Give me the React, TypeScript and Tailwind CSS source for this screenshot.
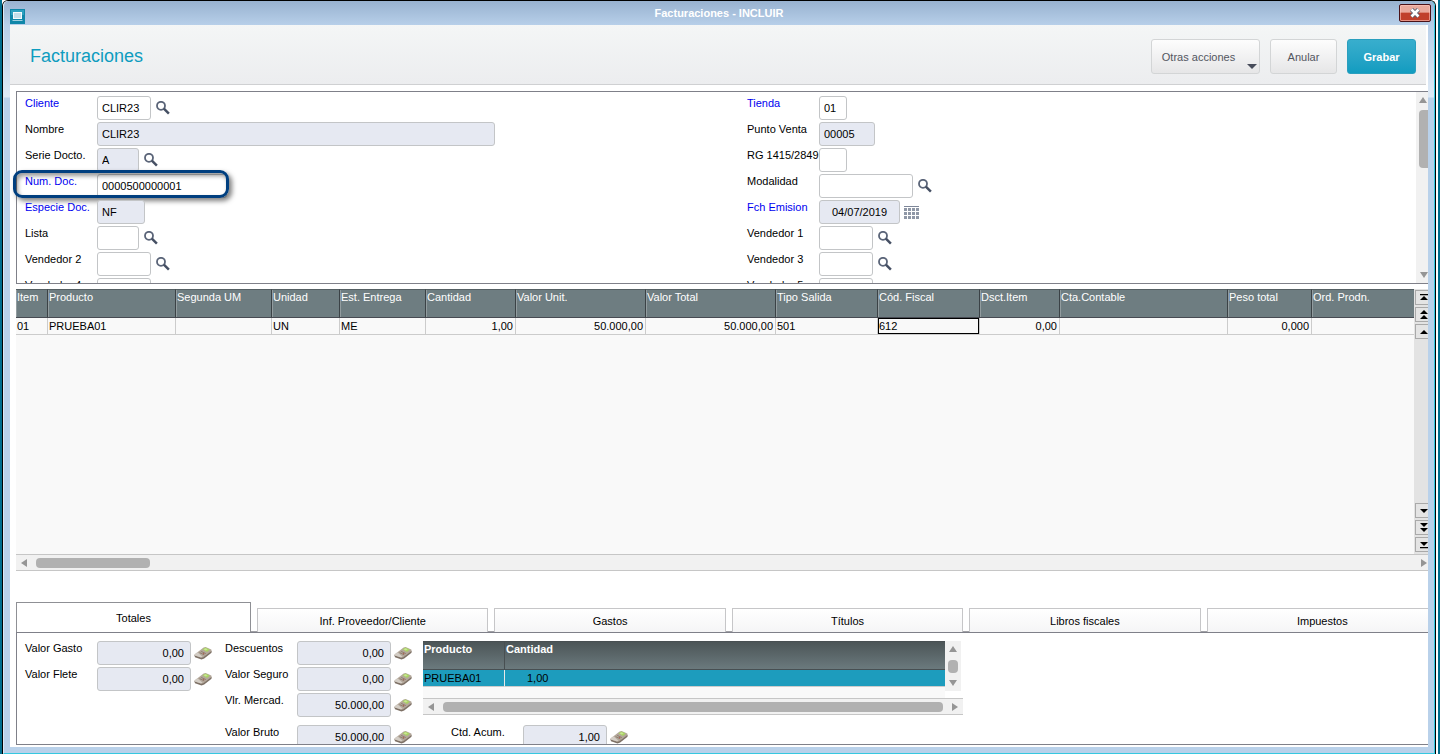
import { useId } from "react";
import type { ReactNode } from "react";

type Dir = "up" | "down" | "left" | "right";

const arrowPaths: Record<Dir, string> = {
  up: "M0 7 L4 1 L8 7Z",
  down: "M0 1 L8 1 L4 7Z",
  left: "M7 0 L7 8 L1 4Z",
  right: "M1 0 L7 4 L1 8Z",
};

function Arrow({ dir }: { dir: Dir }) {
  return (
    <svg width="8" height="8" viewBox="0 0 8 8" className="block shrink-0" aria-hidden="true">
      <path d={arrowPaths[dir]} fill="#959595" />
    </svg>
  );
}

function SearchIcon() {
  return (
    <svg width="14" height="14" viewBox="0 0 14 14" aria-hidden="true">
      <circle cx="5" cy="4.8" r="4" fill="none" stroke="#5a6478" strokeWidth="1.8" />
      <path d="M7.9 7.7 L12.9 12.7" stroke="#454f63" strokeWidth="2.5" />
    </svg>
  );
}

function CalendarIcon() {
  const rows = [2, 6, 10];
  const cols = [0, 4, 8, 12];
  return (
    <svg width="15" height="14" viewBox="0 0 15 14" aria-hidden="true" shapeRendering="crispEdges">
      <rect x="0" y="0" width="15" height="1" fill="#7d8698" />
      {rows.map((y) =>
        cols.map((x) => <rect key={`${x}-${y}`} x={x} y={y} width="3" height="3" fill="#8f97a6" />)
      )}
    </svg>
  );
}

function CalcIcon() {
  return (
    <svg width="18" height="15" viewBox="0 0 18 15" aria-hidden="true">
      <path d="M0.3 9.2 L11 3 L17.7 5 L17.5 6.8 L10.2 12.6 L7.5 13.4 L1 11.2Z" fill="#7d7065" />
      <path d="M0.5 8.4 L9.6 1.4 L11.6 1 L17.3 3.6 L17.6 5 L9 11.4 L7 11.6 L0.8 9.6Z" fill="#b3a79a" />
      <path d="M0.5 8.4 L3.5 6.2 L8.6 10.8 L7 11.4 L0.8 9.4Z" fill="#d3cdc5" />
      <path d="M8.4 3.2 L11.4 1.6 L15.8 3.6 L13 6Z" fill="#a9d464" />
      <path d="M9.6 3.2 L11.5 2.2 L13.6 3.2 L11.8 4.4Z" fill="#c9e694" />
      <path d="M5.6 6.6 L10.4 8.9 M7.2 5.4 L11.8 7.6" stroke="#8a7a6c" strokeWidth="0.9" />
      <circle cx="9.6" cy="7.6" r="0.7" fill="#b5594c" />
    </svg>
  );
}

interface FieldProps {
  label: string;
  value?: string;
  width: string;
  required?: boolean;
  disabled?: boolean;
  align?: string;
  action?: "search" | "calendar" | "calc";
  highlight?: boolean;
}

function Field({ label, value = "", width, required, disabled, align = "pl-1", action, highlight }: FieldProps) {
  const id = useId();
  return (
    <div className="relative flex h-6 shrink-0 items-start">
      <label htmlFor={id} className={`w-[72px] shrink-0 leading-[14px] whitespace-nowrap ${required ? "text-[#0000f0]" : "text-black"}`}>
        {label}
      </label>
      <input
        id={id}
        defaultValue={value}
        readOnly={disabled}
        className={`h-6 shrink-0 rounded-[3px] border border-[#c3c5c7] text-black outline-none ${width} ${align} ${disabled ? "bg-[#e6e9f2]" : "bg-white"}`}
      />
      {action === "search" && (
        <button type="button" aria-label={`Buscar ${label}`} className="mt-[5px] ml-[5px]">
          <SearchIcon />
        </button>
      )}
      {action === "calendar" && (
        <button type="button" aria-label={`Calendario ${label}`} className="mt-1.5 ml-1">
          <CalendarIcon />
        </button>
      )}
      {action === "calc" && (
        <button type="button" aria-label={`Calcular ${label}`} className="mt-[5px] ml-[3px]">
          <CalcIcon />
        </button>
      )}
      {highlight && (
        <div className="pointer-events-none absolute -top-1 -left-3 h-7 w-[216px] rounded-[9px] border-3 border-[#003f7f] shadow-[3px_3px_5px_rgba(0,0,0,0.5),inset_2px_3px_4px_rgba(0,0,0,0.4)]" />
      )}
    </div>
  );
}

const columns: { title: string; width: string; value: string; right?: boolean; focus?: boolean }[] = [
  { title: "Item", width: "w-8", value: "01" },
  { title: "Producto", width: "w-32", value: "PRUEBA01" },
  { title: "Segunda UM", width: "w-24", value: "" },
  { title: "Unidad", width: "w-[68px]", value: "UN" },
  { title: "Est. Entrega", width: "w-[86px]", value: "ME" },
  { title: "Cantidad", width: "w-[90px]", value: "1,00", right: true },
  { title: "Valor Unit.", width: "w-[130px]", value: "50.000,00", right: true },
  { title: "Valor Total", width: "w-[130px]", value: "50.000,00", right: true },
  { title: "Tipo Salida", width: "w-[102px]", value: "501" },
  { title: "Cód. Fiscal", width: "w-[102px]", value: "612", focus: true },
  { title: "Dsct.Item", width: "w-20", value: "0,00", right: true },
  { title: "Cta.Contable", width: "w-[168px]", value: "" },
  { title: "Peso total", width: "w-[84px]", value: "0,000", right: true },
  { title: "Ord. Prodn.", width: "w-auto", value: "" },
];

function NavButton({ label, children }: { label: string; children: ReactNode }) {
  return (
    <button
      type="button"
      aria-label={label}
      className="flex h-[15px] w-[17px] shrink-0 items-center justify-center border border-[#a9a9a9] bg-[#e4e4e4]"
    >
      <svg width="9" height="11" viewBox="0 0 9 11" fill="#000" aria-hidden="true">
        {children}
      </svg>
    </button>
  );
}

function ItemsGrid() {
  return (
    <section className="mt-[5px] flex min-h-40 flex-1 flex-col">
      <div className="flex min-h-0 flex-1">
        <div className="min-w-0 flex-1 overflow-hidden bg-[#f9f9f9]">
          <table className="w-full table-fixed border-separate border-spacing-0">
            <thead>
              <tr>
                {columns.map((c) => (
                  <th
                    key={c.title}
                    className={`h-[29px] overflow-hidden border-t border-r border-b border-t-[#555f63] border-r-[#3b4246] border-b-[#474a52] bg-[#6e7d81] pl-px text-left align-top leading-[14px] font-normal whitespace-nowrap text-white shadow-[inset_1px_0_0_#929c9f] last:border-r-0 ${c.width}`}
                  >
                    {c.title}
                  </th>
                ))}
              </tr>
            </thead>
            <tbody>
              <tr>
                {columns.map((c) => (
                  <td
                    key={c.title}
                    className={`h-[17px] border-r border-b border-[#cccccc] leading-4 whitespace-nowrap text-black last:border-r-0 ${c.right ? "pr-0.5 text-right" : "pl-px"} ${c.focus ? "shadow-[inset_0_0_0_1px_#000]" : ""}`}
                  >
                    {c.value}
                  </td>
                ))}
              </tr>
            </tbody>
          </table>
        </div>
        <div className="flex w-3.5 flex-col justify-between overflow-hidden bg-[#e3e3e3] pt-px pb-0.5 pl-px">
          <div className="flex flex-col gap-0.5">
            <NavButton label="Primero">
              <path d="M1 2h8v1.2H1z M5 4 L9 8 H1Z" />
            </NavButton>
            <NavButton label="Página anterior">
              <path d="M5 1 L9 5 H1Z M5 6 L9 10 H1Z" />
            </NavButton>
            <NavButton label="Anterior">
              <path d="M5 4 L9 8 H1Z" />
            </NavButton>
          </div>
          <div className="flex flex-col gap-0.5">
            <NavButton label="Siguiente">
              <path d="M1 4 H9 L5 8Z" />
            </NavButton>
            <NavButton label="Página siguiente">
              <path d="M1 1 H9 L5 5Z M1 6 H9 L5 10Z" />
            </NavButton>
            <NavButton label="Último">
              <path d="M1 3 H9 L5 7Z M1 8h8v1.2H1z" />
            </NavButton>
          </div>
        </div>
      </div>
      <div className="flex h-[17px] shrink-0 items-center justify-between border-y border-[#c6c6c6] bg-[#f1f1f1] pl-1">
        <div className="flex items-center gap-2">
          <Arrow dir="left" />
          <div className="h-2.5 w-[114px] rounded-[4px] bg-[#b1b1b1]" />
        </div>
        <Arrow dir="right" />
      </div>
    </section>
  );
}

function Summary() {
  const head =
    "h-[29px] border-t border-b border-[#484f52] pl-px text-left align-top leading-[14px] font-bold text-white";
  return (
    <div className="w-[540px]">
      <div className="flex h-[57px] bg-[#f9f9f9]">
        <div className="min-w-0 flex-1 overflow-hidden">
          <table className="w-full table-fixed border-separate border-spacing-0">
            <thead className="bg-linear-to-b from-[#4b5456] to-[#6c7b7f]">
              <tr>
                <th className={`w-[82px] border-r ${head}`}>Producto</th>
                <th className={head}>Cantidad</th>
              </tr>
            </thead>
            <tbody className="bg-[#1d9cbd] text-black">
              <tr>
                <td className="h-[17px] border-r border-b border-r-[#e8e8e8] border-b-[#cccccc] pl-px leading-4">PRUEBA01</td>
                <td className="h-[17px] border-b border-[#cccccc] pl-[22px] leading-4">1,00</td>
              </tr>
            </tbody>
          </table>
        </div>
        <div className="flex w-[18px] flex-col bg-white">
          <div className="flex h-[50px] w-4 flex-col items-center justify-between bg-[#f1f1f1] py-1">
            <Arrow dir="up" />
            <div className="h-[13px] w-2.5 rounded-[4px] bg-[#b1b1b1]" />
            <Arrow dir="down" />
          </div>
        </div>
      </div>
      <div className="flex h-[17px] items-center gap-2 border-y border-[#c6c6c6] bg-[#f1f1f1] px-1">
        <Arrow dir="left" />
        <div className="h-2.5 flex-1 rounded-[4px] bg-[#b1b1b1]" />
        <Arrow dir="right" />
      </div>
    </div>
  );
}

const tabs = ["Inf. Proveedor/Cliente", "Gastos", "Títulos", "Libros fiscales", "Impuestos"];

function TitleBar() {
  return (
    <div className="relative flex h-[23px] shrink-0 items-center justify-center text-[11px] font-bold text-white">
      <svg width="15" height="15" viewBox="0 0 15 15" className="absolute top-[7px] left-1.5" aria-hidden="true">
        <rect x="0" y="0" width="15" height="15" fill="#0f87a9" />
        <rect x="1" y="1" width="13" height="5" fill="#2ba0bf" />
        <rect x="3.5" y="3.5" width="8" height="6" fill="#c3dfea" stroke="#f4fafc" />
        <path d="M2.5 11.5h10" stroke="#9fcfdf" />
      </svg>
      <h1>Facturaciones - INCLUIR</h1>
      <button
        type="button"
        aria-label="Cerrar"
        className="absolute top-0.5 right-[3px] flex h-[18px] w-8 items-center justify-center rounded-[2px] border border-[#4a1218] bg-linear-to-b from-[#e9a99c] from-45% to-[#c0402b] to-50% shadow-[inset_0_0_0_1px_rgba(255,200,190,0.6)]"
      >
        <svg width="12" height="10" viewBox="0 0 12 10" aria-hidden="true">
          <path d="M2.5 1.5 L9.5 8.5 M9.5 1.5 L2.5 8.5" stroke="#5b5f70" strokeWidth="4.4" />
          <path d="M2.5 1.5 L9.5 8.5 M9.5 1.5 L2.5 8.5" stroke="#fff" strokeWidth="2.6" />
        </svg>
      </button>
    </div>
  );
}

export default function App() {
  const plainButton =
    "rounded-[3px] border border-[#d3d5d6] bg-linear-to-b from-[#fdfdfd] to-[#e6e6e7] pt-0.5 text-[#53565f]";
  return (
    <div className="h-screen min-h-[600px] overflow-hidden border-x-2 border-[#006d8d] bg-white pr-0.5 font-['Liberation_Sans',Arial,sans-serif] text-[11px]">
      <div className="h-full rounded-t-[6px] border-x border-t border-black">
        <div className="flex h-full flex-col rounded-t-[5px] border-r border-b border-l border-r-[#35c8e0] border-b-[#35c8e0] border-l-[#dce8f5] bg-[linear-gradient(to_bottom,#98b2d0_0,#b7cfe9_24px,#dfeaf6_96px,#b9d1ea_97px)] pt-px">
          <TitleBar />
          <main className="mr-1.5 mb-1.5 ml-1.5 flex min-h-0 flex-1 flex-col bg-white pl-1.5">
            <header className="mr-0.5 -ml-1.5 flex h-[60px] shrink-0 items-center justify-between border-b border-[#cfd0d2] bg-linear-to-b from-[#f4f6f6] to-[#ecedef] pt-0.5 pr-2.5 pl-5">
              <h2 className="text-lg text-[#0e9cbf]">Facturaciones</h2>
              <div className="mt-0.5 flex h-[35px] gap-2.5">
                <button type="button" className={`relative w-[109px] pr-3.5 ${plainButton}`}>
                  Otras acciones
                  <svg width="10" height="5" viewBox="0 0 10 5" className="absolute right-0.5 bottom-1" aria-hidden="true">
                    <path d="M0 0h10L5 5z" fill="#474c5a" />
                  </svg>
                </button>
                <button type="button" className={`w-[67px] ${plainButton}`}>
                  Anular
                </button>
                <button
                  type="button"
                  className="w-[69px] rounded-[3px] border border-[#2a9fbe] bg-linear-to-b from-[#38aecd] to-[#119cc0] pt-0.5 font-bold text-white"
                >
                  Grabar
                </button>
              </div>
            </header>

            <section className="mt-1.5 flex h-[193px] shrink-0 border-y border-l border-[#7f8089]">
              <div className="grid min-w-0 flex-1 grid-cols-[722px_minmax(0,1fr)] overflow-x-visible overflow-y-clip pt-1 pl-2">
                <div className="flex flex-col gap-0.5">
                  <Field label="Cliente" value="CLIR23" width="w-[54px]" required action="search" />
                  <Field label="Nombre" value="CLIR23" width="w-[398px]" disabled />
                  <Field label="Serie Docto." value="A" width="w-[42px]" disabled action="search" />
                  <Field label="Num. Doc." value="0000500000001" width="w-[130px]" required highlight />
                  <Field label="Especie Doc." value="NF" width="w-12" required disabled />
                  <Field label="Lista" width="w-[42px]" action="search" />
                  <Field label="Vendedor 2" width="w-[54px]" action="search" />
                  <Field label="Vendedor 4" width="w-[54px]" />
                </div>
                <div className="flex flex-col gap-0.5">
                  <Field label="Tienda" value="01" width="w-7" required />
                  <Field label="Punto Venta" value="00005" width="w-14" disabled />
                  <Field label="RG 1415/2849" width="w-7" />
                  <Field label="Modalidad" width="w-[94px]" action="search" />
                  <Field label="Fch Emision" value="04/07/2019" width="w-[81px]" required disabled align="text-center" action="calendar" />
                  <Field label="Vendedor 1" width="w-[54px]" action="search" />
                  <Field label="Vendedor 3" width="w-[54px]" action="search" />
                  <Field label="Vendedor 5" width="w-[54px]" />
                </div>
              </div>
              <div className="flex w-3 flex-col items-end justify-between bg-[#f1f1f1] pt-1 pb-1">
                <div className="flex w-[9px] flex-col gap-1.5">
                  <Arrow dir="up" />
                  <div className="h-[58px] rounded-l-[4px] bg-[#b1b1b1]" />
                </div>
                <Arrow dir="down" />
              </div>
            </section>

            <ItemsGrid />

            <section className="mt-[31px] flex shrink-0 flex-col">
              <div className="overflow-hidden">
                <div className="grid w-[calc(100%+10px)] grid-cols-[235px_repeat(5,minmax(0,1fr))] items-end gap-x-1.5 bg-[linear-gradient(to_top,#a0a0a5_1px,transparent_1px)]" role="tablist">
                  <button type="button" role="tab" aria-selected="true" className="h-[30px] border-x border-t border-[#8f9095] bg-white pt-0.5">
                    Totales
                  </button>
                  {tabs.map((t) => (
                    <button
                      key={t}
                      type="button"
                      role="tab"
                      aria-selected="false"
                      className="h-6 border-x border-t border-[#c6c6c8] bg-linear-to-b from-white to-[#f5f5f6] pt-0.5"
                    >
                      {t}
                    </button>
                  ))}
                </div>
              </div>
              <div className="flex h-[113px] items-start overflow-hidden border-y border-l border-[#7f8089] pt-2 pl-2">
                <div className="flex w-[200px] shrink-0 flex-col gap-0.5">
                  <Field label="Valor Gasto" value="0,00" width="w-[94px]" disabled align="text-right pr-1.5" action="calc" />
                  <Field label="Valor Flete" value="0,00" width="w-[94px]" disabled align="text-right pr-1.5" action="calc" />
                </div>
                <div className="flex w-[198px] shrink-0 flex-col gap-2">
                  <div className="flex flex-col gap-0.5">
                    <Field label="Descuentos" value="0,00" width="w-[94px]" disabled align="text-right pr-1.5" action="calc" />
                    <Field label="Valor Seguro" value="0,00" width="w-[94px]" disabled align="text-right pr-1.5" action="calc" />
                    <Field label="Vlr. Mercad." value="50.000,00" width="w-[94px]" disabled align="text-right pr-1.5" action="calc" />
                  </div>
                  <Field label="Valor Bruto" value="50.000,00" width="w-[94px]" disabled align="text-right pr-1.5" action="calc" />
                </div>
                <div className="flex flex-col gap-2.5">
                  <Summary />
                  <div className="pl-7">
                    <Field label="Ctd. Acum." value="1,00" width="w-[84px]" disabled align="text-right pr-1.5" action="calc" />
                  </div>
                </div>
              </div>
              <div className="h-0.5" />
            </section>
          </main>
        </div>
      </div>
    </div>
  );
}
